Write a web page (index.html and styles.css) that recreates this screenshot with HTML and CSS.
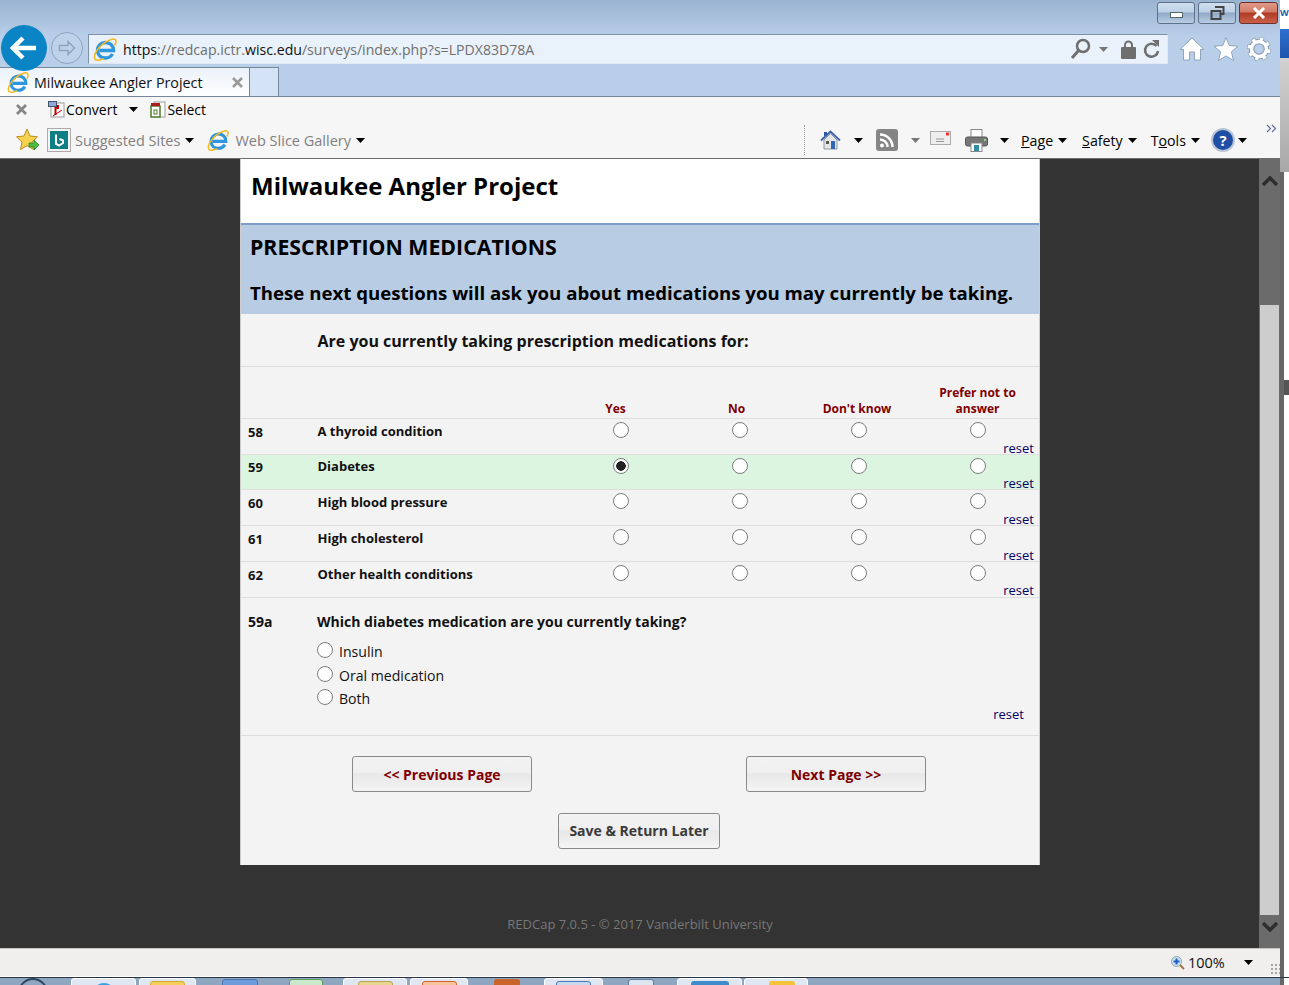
FILE: index.html
```html
<!DOCTYPE html>
<html lang="en">
<head>
    <meta charset="UTF-8">
    <meta name="viewport" content="width=device-width, initial-scale=1.0">
    <title>Milwaukee Angler Project</title>
    <link rel="stylesheet" href="styles.css">
</head>
<body>
    <svg class="defs" width="0" height="0">
        <symbol id="ie" viewBox="0 0 24 24">
            <path d="M6.500 13.500H20.500C20.500 8.500 17 5.500 12.500 5.500C8 5.500 4.500 9 4.500 13.500C4.500 18 8 21 12.500 21C15.500 21 18 19.500 19.500 17" fill="none" stroke="#2e96de" stroke-width="3.400"/>
            <path d="M2 22.500C-0.500 17 8 5 20 2C24 1.500 23.500 6 21.500 8.500M2 22.500C4 23.500 8 23 11 21.500" fill="none" stroke="#f2b81f" stroke-width="1.600"/>
        </symbol>
        <symbol id="caret" viewBox="0 0 9 5">
            <path d="M0 0H9L4.500 5Z"/>
        </symbol>
    </svg>

    <div class="screen">
        <div class="window">
            <div class="topbar">
                <div class="winbtns">
                    <div class="winbtn"><span class="min-glyph"></span></div>
                    <div class="winbtn">
                        <svg width="15" height="14" viewBox="0 0 15 14"><path d="M5 1H13.500V8H11M1.500 5H10.500V13H1.500Z" fill="none" stroke="#444" stroke-width="2"/></svg>
                    </div>
                    <div class="winbtn winbtn-close">
                        <svg width="14" height="12" viewBox="0 0 14 12"><path d="M2 1L12 11M12 1L2 11" fill="none" stroke="#fff" stroke-width="3"/></svg>
                    </div>
                </div>
                <div class="navrow">
                    <div class="back-btn">
                        <svg width="28" height="24" viewBox="0 0 28 24"><path d="M13 2L3 12L13 22M3 12H26" fill="none" stroke="#fff" stroke-width="4.500"/></svg>
                    </div>
                    <div class="fwd-btn">
                        <svg width="18" height="16" viewBox="0 0 18 16"><path d="M10 1.500L16.500 8L10 14.500V10.500H1.500V5.500H10Z" fill="none" stroke="#8ea6c0" stroke-width="1.500"/></svg>
                    </div>
                    <div class="address">
                        <svg class="addr-ie" width="24" height="24"><use href="#ie"/></svg>
                        <span class="url"><b>https</b>://redcap.ictr.<b>wisc.edu</b>/surveys/index.php?s=LPDX83D78A</span>
                        <svg width="22" height="22" viewBox="0 0 22 22"><circle cx="13" cy="8" r="6" fill="none" stroke="#6e6e6e" stroke-width="2.500"/><path d="M9 12L2 20" stroke="#6e6e6e" stroke-width="3"/></svg>
                        <svg class="caret addr-caret" width="9" height="5"><use href="#caret"/></svg>
                        <svg class="addr-lock" width="15" height="19" viewBox="0 0 15 19"><path d="M4 8V5A3.500 3.500 0 0 1 11 5V8" fill="none" stroke="#6e6e6e" stroke-width="2"/><rect y="7" width="15" height="12" rx="1" fill="#6e6e6e"/></svg>
                        <svg class="addr-refresh" width="17" height="20" viewBox="0 0 17 20"><path d="M13.500 7A6.500 6.500 0 1 0 15 12" fill="none" stroke="#6e6e6e" stroke-width="2.500"/><path d="M9 1L16 1V8Z" fill="#6e6e6e"/></svg>
                    </div>
                    <div class="ie-icons">
                        <svg width="26" height="24" viewBox="0 0 26 24"><path d="M13 1L25 12.500H21.500V23H15.500V15H10.500V23H4.500V12.500H1Z" fill="#fff" stroke="#8fa3bb"/></svg>
                        <svg width="26" height="24" viewBox="0 0 26 24"><path d="M13 0.500L16.300 8.500L25 9.200L18.400 14.800L20.500 23.500L13 18.900L5.500 23.500L7.600 14.800L1 9.200L9.700 8.500Z" fill="#fff" stroke="#8fa3bb"/></svg>
                        <svg width="24" height="24" viewBox="0 0 24 24"><circle cx="12" cy="12" r="7.500" fill="none" stroke="#8599b2" stroke-width="5.500"/><circle cx="12" cy="12" r="10.200" fill="none" stroke="#8599b2" stroke-width="3.800" stroke-dasharray="4.500 3.510"/><circle cx="12" cy="12" r="10" fill="none" stroke="#fff" stroke-width="3" stroke-dasharray="3.500 4.350" stroke-dashoffset="-0.400"/><circle cx="12" cy="12" r="7.500" fill="none" stroke="#fff" stroke-width="3.400"/></svg>
                    </div>
                </div>
            </div>

            <div class="tabrow">
                <div class="tab">
                    <svg width="22" height="22"><use href="#ie"/></svg>
                    <span class="tab-title">Milwaukee Angler Project</span>
                    <svg class="tab-close" width="11" height="11" viewBox="0 0 11 11"><path d="M1 1L10 10M10 1L1 10" stroke="#9a9a9a" stroke-width="2.600"/></svg>
                </div>
                <div class="newtab"></div>
            </div>

            <div class="cmd-row cmd-row-one">
                <svg class="bar-close" width="11" height="11" viewBox="0 0 11 11"><path d="M1 1L10 10M10 1L1 10" stroke="#858585" stroke-width="2.800"/></svg>
                <svg class="pdf-icon" width="17" height="17" viewBox="0 0 17 17"><rect x="3" y="2" width="13" height="14" fill="#fff" stroke="#999"/><path d="M5 5H10V7H7.500V14" fill="none" stroke="#c00000" stroke-width="2"/><path d="M5 15L14 9" stroke="#c00000"/><rect x="0.500" y="0.500" width="8" height="5" fill="#8faadc" stroke="#44546a"/></svg>
                <span class="cmd-label">Convert</span>
                <svg class="caret caret-dark convert-caret" width="9" height="5"><use href="#caret"/></svg>
                <svg class="select-icon" width="16" height="17" viewBox="0 0 16 17"><rect x="4" y="1" width="11" height="15" fill="#fff" stroke="#999"/><rect x="1" y="5" width="9" height="11" fill="#fff" stroke="#4e7d2a" stroke-width="1.500"/><rect x="4" y="9" width="3" height="4" fill="none" stroke="#4e7d2a"/><rect x="1" y="2" width="9" height="3" fill="#b01c1c"/></svg>
                <span class="cmd-label">Select</span>
            </div>

            <div class="cmd-row cmd-row-two">
                <svg class="fav-star" width="24" height="24" viewBox="0 0 24 24"><path d="M11 1L14 8L21.500 8.800L16 14L17.500 21.500L11 17.700L4.500 21.500L6 14L0.500 8.800L8 8Z" fill="#f7d24e" stroke="#b98d1f"/><path d="M13 15H18V12L23 17L18 22V19H13Z" fill="#4dbb3f" stroke="#2a7f25" stroke-width="0.700"/></svg>
                <div class="bing-box">
                    <svg width="18" height="18" viewBox="0 0 18 18"><rect width="18" height="18" fill="#0f7f86"/><path d="M6 3.500V13L9 14.500L13 12V9.500L9.500 8" fill="none" stroke="#fff" stroke-width="2"/></svg>
                </div>
                <span class="fav-link">Suggested Sites</span>
                <svg class="caret caret-dark" width="9" height="5"><use href="#caret"/></svg>
                <svg class="slice-icon" width="22" height="22"><use href="#ie"/></svg>
                <span class="fav-link">Web Slice Gallery</span>
                <svg class="caret caret-dark" width="9" height="5"><use href="#caret"/></svg>

                <div class="tools">
                    <svg class="t-home" width="21" height="20" viewBox="0 0 21 20"><path d="M4 2H7V6H4Z" fill="#2f55a8"/><path d="M4 10V19H17V10L10.500 3.500Z" fill="#e4e6e6" stroke="#8d97a3"/><path d="M1 10.500L10.500 1.500L20 10.500" fill="none" stroke="#3a61ad" stroke-width="1.800"/><rect x="6" y="11" width="3" height="3" fill="#555"/><rect x="11" y="11" width="4" height="8" fill="#2f67b5"/></svg>
                    <svg class="caret caret-dark t-c1" width="9" height="5"><use href="#caret"/></svg>
                    <svg class="t-rss" width="22" height="22" viewBox="0 0 22 22"><rect width="22" height="22" rx="3" fill="#858585"/><circle cx="6" cy="16.500" r="2" fill="#fff"/><path d="M4 10.500A7.500 7.500 0 0 1 11.500 18M4 5.500A12.500 12.500 0 0 1 16.500 18" fill="none" stroke="#fff" stroke-width="2.500"/></svg>
                    <svg class="caret t-c2" width="9" height="5"><use href="#caret"/></svg>
                    <svg class="t-mail" width="21" height="14" viewBox="0 0 21 14"><rect x="0.500" y="0.500" width="20" height="13" fill="#eee" stroke="#aaa"/><rect x="16" y="1.500" width="3" height="3" fill="#e33"/><path d="M6 8H14M6 10.500H14" stroke="#999"/></svg>
                    <svg class="t-print" width="23" height="23" viewBox="0 0 23 23"><rect x="6" y="0.500" width="11" height="8" fill="#fff" stroke="#888"/><rect x="0.500" y="8" width="22" height="9" rx="2" fill="#777" stroke="#555"/><rect x="6" y="14" width="11" height="8.500" fill="#fff" stroke="#888"/><rect x="9" y="16" width="5" height="6" fill="#2f8ea5"/><rect x="19" y="10" width="2" height="2" fill="#8fdc7f"/></svg>
                    <svg class="caret caret-dark t-c3" width="9" height="5"><use href="#caret"/></svg>
                    <span class="t-menu t-page"><u>P</u>age</span>
                    <svg class="caret caret-dark" width="9" height="5"><use href="#caret"/></svg>
                    <span class="t-menu t-safety"><u>S</u>afety</span>
                    <svg class="caret caret-dark" width="9" height="5"><use href="#caret"/></svg>
                    <span class="t-menu t-tools">T<u>o</u>ols</span>
                    <svg class="caret caret-dark" width="9" height="5"><use href="#caret"/></svg>
                    <div class="help-btn">?</div>
                    <svg class="caret caret-dark t-c4" width="9" height="5"><use href="#caret"/></svg>
                    <svg class="overflow" width="11" height="9" viewBox="0 0 11 9"><path d="M1 1L4.500 4.500L1 8M6 1L9.500 4.500L6 8" fill="none" stroke="#6a6aa8" stroke-width="1.200"/></svg>
                </div>
            </div>

            <div class="viewport">
                <div class="page">
                    <div class="survey">
                        <div class="survey-head">Milwaukee Angler Project</div>
                        <div class="section-head">
                            <div class="section-title">PRESCRIPTION MEDICATIONS</div>
                            <div class="section-sub">These next questions will ask you about medications you may currently be taking.</div>
                        </div>
                        <div class="matrix-intro">Are you currently taking prescription medications for:</div>

                        <div class="matrix-head">
                            <div class="col-yes">Yes</div>
                            <div class="col-no">No</div>
                            <div class="col-dk">Don't know</div>
                            <div>Prefer not to<br>answer</div>
                        </div>

                        <div class="mrow">
                            <div class="qnum">58</div>
                            <div class="qlabel">A thyroid condition</div>
                            <div class="cell"><input type="radio" name="q58"></div>
                            <div class="cell"><input type="radio" name="q58"></div>
                            <div class="cell"><input type="radio" name="q58"></div>
                            <div class="cell"><input type="radio" name="q58"><a class="reset">reset</a></div>
                        </div>
                        <div class="mrow mrow-on">
                            <div class="qnum">59</div>
                            <div class="qlabel">Diabetes</div>
                            <div class="cell"><input type="radio" name="q59" checked></div>
                            <div class="cell"><input type="radio" name="q59"></div>
                            <div class="cell"><input type="radio" name="q59"></div>
                            <div class="cell"><input type="radio" name="q59"><a class="reset">reset</a></div>
                        </div>
                        <div class="mrow">
                            <div class="qnum">60</div>
                            <div class="qlabel">High blood pressure</div>
                            <div class="cell"><input type="radio" name="q60"></div>
                            <div class="cell"><input type="radio" name="q60"></div>
                            <div class="cell"><input type="radio" name="q60"></div>
                            <div class="cell"><input type="radio" name="q60"><a class="reset">reset</a></div>
                        </div>
                        <div class="mrow">
                            <div class="qnum">61</div>
                            <div class="qlabel">High cholesterol</div>
                            <div class="cell"><input type="radio" name="q61"></div>
                            <div class="cell"><input type="radio" name="q61"></div>
                            <div class="cell"><input type="radio" name="q61"></div>
                            <div class="cell"><input type="radio" name="q61"><a class="reset">reset</a></div>
                        </div>
                        <div class="mrow mrow-last">
                            <div class="qnum">62</div>
                            <div class="qlabel">Other health conditions</div>
                            <div class="cell"><input type="radio" name="q62"></div>
                            <div class="cell"><input type="radio" name="q62"></div>
                            <div class="cell"><input type="radio" name="q62"></div>
                            <div class="cell"><input type="radio" name="q62"><a class="reset">reset</a></div>
                        </div>

                        <div class="followup">
                            <div class="qnum">59a</div>
                            <div class="followup-body">
                                <div class="qlabel followup-q">Which diabetes medication are you currently taking?</div>
                                <label class="opt"><input type="radio" name="q59a"> Insulin</label>
                                <label class="opt"><input type="radio" name="q59a"> Oral medication</label>
                                <label class="opt"><input type="radio" name="q59a"> Both</label>
                                <a class="reset reset-follow">reset</a>
                            </div>
                        </div>

                        <div class="survey-nav">
                            <div class="nav-pages">
                                <button class="sv-btn sv-prev">&lt;&lt; Previous Page</button>
                                <button class="sv-btn sv-next">Next Page &gt;&gt;</button>
                            </div>
                            <button class="sv-btn sv-save">Save &amp; Return Later</button>
                        </div>
                    </div>
                    <div class="page-foot">REDCap 7.0.5 - &copy; 2017 Vanderbilt University</div>
                </div>
                <div class="scrollbar">
                    <div class="sb-btn">
                        <svg width="16" height="10" viewBox="0 0 16 10"><path d="M1 9L8 2L15 9" fill="none" stroke="#2e2e2e" stroke-width="3.500"/></svg>
                    </div>
                    <div class="sb-track"></div>
                    <div class="sb-thumb"></div>
                    <div class="sb-btn sb-btn-down">
                        <svg width="16" height="10" viewBox="0 0 16 10"><path d="M1 1L8 8L15 1" fill="none" stroke="#2e2e2e" stroke-width="3.500"/></svg>
                    </div>
                </div>
            </div>

            <div class="statusbar">
                <svg class="zoom-icon" width="14" height="14" viewBox="0 0 14 14"><circle cx="5.500" cy="5.500" r="5" fill="#cfe0f5" stroke="#8aa"/><path d="M5.500 2.500V8.500M2.500 5.500H8.500" stroke="#1f5fc0" stroke-width="2"/><path d="M9 9L13 13" stroke="#a5713c" stroke-width="2"/></svg>
                <span class="zoom-val">100%</span>
                <svg class="caret caret-dark zoom-caret" width="9" height="5"><use href="#caret"/></svg>
                <div class="grip"></div>
            </div>
        </div>

        <div class="sliver">
            <div class="sliver-word">W</div>
            <div class="sliver-blue"></div>
            <div class="sliver-grey"></div>
            <div class="sliver-rest"></div>
            <div class="sliver-dark"></div>
            <div class="sliver-rest sliver-rest-end"></div>
        </div>
    </div>

    <div class="taskbar">
        <div class="orb"></div>
        <div class="task task-a"><span class="peek peek-blue"></span></div>
        <div class="task task-b"><span class="peek peek-yellow"></span></div>
        <div class="peek-flat peek-app1"></div>
        <div class="peek-flat peek-app2"></div>
        <div class="task task-c"><span class="peek peek-folder"></span></div>
        <div class="task task-d"><span class="peek peek-orange"></span></div>
        <div class="peek-flat peek-ppt"></div>
        <div class="task task-e"><span class="peek peek-outline"></span></div>
        <div class="peek-flat peek-app3"></div>
        <div class="task task-f"><span class="peek peek-net"></span></div>
        <div class="task task-g"><span class="peek peek-fire"></span></div>
        <div class="task-edge"></div>
    </div>
</body>
</html>
```

FILE: styles.css
```css
* {
    box-sizing: border-box;
}
html, body {
    margin: 0;
    height: 985px;
    overflow: hidden;
}
body {
    font-family: "Open Sans", Arial, sans-serif;
    background-color: #8fa6c0;
}
.defs {
    position: absolute;
}
.screen {
    display: flex;
    height: 977px;
}
.window {
    width: 1280px;
    display: flex;
    flex-direction: column;
}

/* title + address */
.topbar {
    height: 67px;
    background: linear-gradient(#9ab3d0, #b9cfe9 55%);
}
.winbtns {
    height: 34px;
    display: flex;
    justify-content: flex-end;
    gap: 3px;
    padding: 2px 2px 0 0;
}
.winbtn {
    width: 38px;
    height: 22px;
    border: 1px solid #5d7188;
    border-radius: 3px;
    background: linear-gradient(#cfdfef 0, #bdd0e5 45%, #90a9c5 50%, #b9cee5 100%);
    display: flex;
    align-items: center;
    justify-content: center;
}
.winbtn-close {
    width: 39px;
    border-color: #6d2f2a;
    background: linear-gradient(#e09a88 0, #d17a66 45%, #b13a24 50%, #c9604a 100%);
}
.min-glyph {
    width: 13px;
    height: 6px;
    margin-top: 4px;
    background-color: #fff;
    border: 1px solid #566;
}
.navrow {
    height: 30px;
    display: flex;
    align-items: center;
    padding-left: 1px;
}
.back-btn {
    width: 46px;
    height: 46px;
    flex-shrink: 0;
    border-radius: 50%;
    background-color: #0a84c4;
    display: flex;
    align-items: center;
    justify-content: center;
    position: relative;
    z-index: 2;
    margin-top: -2px;
}
.fwd-btn {
    width: 32px;
    height: 32px;
    flex-shrink: 0;
    margin-left: 4px;
    margin-top: -2px;
    border: 1px solid #8fa6bf;
    border-radius: 50%;
    background-color: #bed2e9;
    display: flex;
    align-items: center;
    justify-content: center;
}
.address {
    width: 1080px;
    height: 30px;
    margin-left: 5px;
    display: flex;
    align-items: center;
    padding: 0 7px 0 4px;
    background-color: #e9f1fa;
    border: 1px solid #7e90a6;
    border-right-color: #dfe8f3;
    border-bottom-color: #dfe8f3;
}
.addr-ie {
    flex-shrink: 0;
}
.url {
    flex: 1;
    margin-left: 6px;
    font-size: 14.100px;
    color: #6f6f6f;
    white-space: nowrap;
}
.url b {
    font-weight: 400;
    color: #111;
}
.caret {
    flex-shrink: 0;
    fill: #777;
}
.caret-dark {
    fill: #000;
}
.addr-caret {
    margin-left: 7px;
}
.addr-lock {
    margin-left: 13px;
}
.addr-refresh {
    margin-left: 7px;
}
.ie-icons {
    display: flex;
    align-items: center;
    gap: 8px;
    margin-left: 11px;
}

/* tabs */
.tabrow {
    height: 30px;
    display: flex;
    background-color: #b9cfe9;
    border-bottom: 1px solid #76879c;
}
.tab {
    width: 250px;
    height: 29px;
    display: flex;
    align-items: center;
    gap: 5px;
    padding-left: 7px;
    background: linear-gradient(#eaf1f9, #fff);
    border: 1px solid #76879c;
    border-bottom: 0;
    border-left: 0;
}
.tab-title {
    flex: 1;
    font-size: 14.300px;
    color: #111;
}
.tab-close {
    margin-right: 6px;
}
.newtab {
    width: 29px;
    background-color: #d4e4f6;
    border: 1px solid #76879c;
    border-bottom: 0;
    border-left: 0;
}

/* command + favorites bars */
.cmd-row {
    display: flex;
    align-items: center;
    background-color: #f6f6f6;
    color: #000;
}
.cmd-row-one {
    height: 28px;
    padding: 0 0 4px 16px;
}
.cmd-row-two {
    height: 34px;
    padding: 0 0 3px 16px;
    border-bottom: 1px solid #6e6e6e;
}
.bar-close {
    margin-right: 21px;
    flex-shrink: 0;
}
.pdf-icon {
    flex-shrink: 0;
}
.cmd-label {
    margin-left: 1px;
    font-size: 14px;
}
.convert-caret {
    margin-left: 12px;
}
.select-icon {
    margin-left: 12px;
}
.fav-star {
    flex-shrink: 0;
}
.bing-box {
    width: 24px;
    height: 24px;
    margin-left: 7px;
    display: flex;
    align-items: center;
    justify-content: center;
    border: 1px solid #aaa;
}
.fav-link {
    margin: 0 5px 0 4px;
    font-size: 14.500px;
    color: #808080;
}
.slice-icon {
    margin-left: 13px;
    margin-right: 2px;
}
.tools {
    margin-left: auto;
    height: 30px;
    width: 476px;
    display: flex;
    align-items: center;
    border-left: 1px dotted #999;
    padding-left: 15px;
}
.t-c1 {
    margin-left: 13px;
}
.t-rss {
    margin-left: 13px;
}
.t-c2 {
    margin-left: 13px;
}
.t-mail {
    margin-left: 10px;
    margin-bottom: 4px;
}
.t-print {
    margin-left: 14px;
}
.t-c3 {
    margin-left: 12px;
}
.t-menu {
    margin-right: 5px;
    font-size: 14.200px;
}
.t-page {
    margin-left: 12px;
}
.t-safety {
    margin-left: 15px;
}
.t-tools {
    margin-left: 14px;
}
.help-btn {
    width: 24px;
    height: 24px;
    margin-left: 11px;
    border-radius: 50%;
    border: 2px solid #b9c4d4;
    background-color: #1f4ea5;
    color: #fff;
    font-size: 15px;
    font-weight: 700;
    line-height: 20px;
    text-align: center;
}
.t-c4 {
    margin-left: 3px;
}
.overflow {
    margin-left: 19px;
    margin-bottom: 24px;
    flex-shrink: 0;
}

/* page viewport */
.viewport {
    height: 789px;
    display: flex;
    background-color: #333;
}
.page {
    flex: 1;
    padding-left: 240px;
}
.survey {
    width: 800px;
    height: 706px;
    background-color: #f3f3f3;
    border: 1px solid #ccc;
    border-top: 0;
    border-bottom: 0;
}
.survey-head {
    height: 64px;
    padding: 9px 0 0 10px;
    background-color: #fff;
    border-top: 1px solid #fff;
    font-size: 24px;
    font-weight: 700;
    line-height: 33px;
    color: #000;
}
.section-head {
    height: 91px;
    padding: 8px 9px 0;
    background-color: #b8cce4;
    border-top: 2px solid #7f9ec7;
    font-weight: 700;
    color: #000;
}
.section-title {
    font-size: 21.300px;
    line-height: 28px;
}
.section-sub {
    margin-top: 18px;
    font-size: 18.650px;
    line-height: 27px;
    white-space: nowrap;
}
.matrix-intro {
    height: 53px;
    padding: 16px 0 0 76.500px;
    border-bottom: 1px solid #ddd;
    font-size: 16px;
    font-weight: 700;
    line-height: 22px;
    color: #111;
}
.matrix-head {
    height: 51px;
    display: grid;
    grid-template-columns: repeat(4, 119px);
    justify-content: start;
    align-items: end;
    padding: 0 0 1px 320px;
    text-align: center;
    font-size: 12px;
    font-weight: 700;
    line-height: 16px;
    color: #800000;
}
.col-yes {
    padding-right: 10px;
}
.col-no {
    padding-right: 6px;
}
.col-dk {
    padding-right: 3px;
}
.mrow {
    height: 36px;
    display: grid;
    grid-template-columns: 76.500px 243.500px repeat(4, 119px);
    border-top: 1px solid #ddd;
}
.mrow-on {
    height: 35px;
    background-color: #dcf5e0;
}
.qnum {
    padding: 4px 0 0 7px;
    font-size: 13px;
    font-weight: 700;
    line-height: 18px;
    color: #111;
}
.qlabel {
    padding-top: 3px;
    font-size: 13px;
    font-weight: 700;
    line-height: 18px;
    color: #111;
}
.mrow-on .qnum {
    padding-top: 3px;
}
.mrow-on .qlabel {
    padding-top: 2px;
}
.cell {
    display: flex;
    flex-direction: column;
    align-items: center;
    padding-top: 3px;
}
input[type="radio"] {
    appearance: none;
    flex-shrink: 0;
    width: 16px;
    height: 16px;
    margin: 0;
    border: 1.500px solid #7d7d7d;
    border-radius: 50%;
    background-color: #fff;
}
input[type="radio"]:checked {
    background: radial-gradient(circle, #222 0, #222 4.500px, #fff 5px);
}
.reset {
    font-size: 13px;
    line-height: 16px;
    color: #000066;
}
.cell .reset {
    align-self: flex-end;
    margin: 2px 3px 0 0;
}
.mrow-on .cell .reset, .mrow-last .cell .reset {
    margin-top: 1px;
}
.followup {
    height: 139px;
    display: grid;
    grid-template-columns: 76px 1fr;
    border-top: 1px solid #ddd;
    border-bottom: 1px solid #ddd;
    padding-top: 13px;
}
.followup .qnum {
    padding-top: 2px;
    font-size: 14px;
}
.followup-body {
    display: flex;
    flex-direction: column;
    padding-right: 15px;
}
.followup-q {
    padding-top: 2px;
    font-size: 14px;
    margin-bottom: 9px;
}
.opt {
    height: 23.500px;
    display: flex;
    align-items: center;
    gap: 6px;
    font-size: 14.100px;
    color: #111;
}
.opt input {
    margin-bottom: 3px;
}
.reset-follow {
    align-self: flex-end;
    margin-top: -5px;
}
.survey-nav {
    display: flex;
    flex-direction: column;
    align-items: center;
    padding-top: 20px;
}
.nav-pages {
    width: 100%;
    display: flex;
    gap: 214px;
    padding-left: 111px;
    margin-bottom: 21px;
}
.sv-btn {
    width: 180px;
    height: 36px;
    padding: 0;
    font-family: "Open Sans", Arial, sans-serif;
    font-size: 14px;
    font-weight: 700;
    color: #800000;
    border: 1px solid #8a8a8a;
    border-radius: 3px;
    background: linear-gradient(#f2f2f2, #f0f0f0 45%, #e8e8e8 50%, #f4f4f4);
}
.sv-save {
    width: 162px;
    padding: 0 0 2px 1px;
    margin-left: -3px;
    color: #3a3a3a;
}
.page-foot {
    width: 800px;
    margin-top: 50px;
    text-align: center;
    font-size: 13px;
    line-height: 18px;
    color: #777;
}

/* scrollbar */
.scrollbar {
    width: 21px;
    display: flex;
    flex-direction: column;
    background-color: #6b6b6b;
}
.sb-btn {
    height: 33px;
    padding-top: 10px;
    display: flex;
    align-items: center;
    justify-content: center;
    flex-shrink: 0;
}
.sb-track {
    height: 113px;
}
.sb-thumb {
    height: 610px;
    margin: 0 1px;
    background-color: #cdcdcd;
}
.sb-btn-down {
    flex: 1;
    padding: 0 0 10px;
}

/* status bar */
.statusbar {
    flex: 1;
    display: flex;
    align-items: center;
    padding: 0 4px 0 1171px;
    background-color: #f1eeee;
    border-top: 1px solid #c4c4c4;
    border-bottom: 1px solid #fff;
}
.zoom-icon {
    flex-shrink: 0;
}
.zoom-val {
    margin-left: 3px;
    font-size: 14.500px;
    color: #111;
}
.zoom-caret {
    margin-left: 19px;
}
.grip {
    width: 12px;
    height: 12px;
    margin: 12px 0 0 17px;
    flex-shrink: 0;
    background-image: radial-gradient(#a5a5a5 1px, transparent 1.200px);
    background-size: 4px 4px;
}

/* edge of the window behind */
.sliver {
    width: 9px;
    display: flex;
    flex-direction: column;
    background-color: #fff;
}
.sliver-word {
    height: 29px;
    padding-top: 7px;
    font-size: 9px;
    font-weight: 700;
    line-height: 12px;
    color: #1a5fb4;
    background-color: #fff;
}
.sliver-blue {
    height: 29px;
    background: linear-gradient(#2f6fd0, #1d55ad);
}
.sliver-grey {
    height: 114px;
    background: linear-gradient(#d2d2d2, #a8a8a8);
}
.sliver-rest {
    height: 208px;
    border-left: 4px solid #666;
}
.sliver-rest-end {
    height: auto;
    flex: 1;
}
.sliver-dark {
    height: 15px;
    border-left: 4px solid #666;
    background-color: #555;
}

/* taskbar strip */
.taskbar {
    height: 8px;
    display: flex;
    overflow: hidden;
    border-top: 1px solid #2a3442;
    background-color: #8fa6c0;
}
.orb {
    width: 30px;
    height: 30px;
    margin-left: 18px;
    border: 2px solid #2f4660;
    border-radius: 50%;
    flex-shrink: 0;
}
.task {
    height: 20px;
    flex-shrink: 0;
    display: flex;
    justify-content: center;
    padding-top: 2px;
    background-color: #dfe8f2;
    border: 1px solid #fff;
    border-radius: 3px 3px 0 0;
}
.task-a { width: 65px; margin-left: 23px; }
.task-b { width: 57px; margin-left: 3px; }
.task-c { width: 64px; margin-left: 20px; }
.task-d { width: 58px; margin-left: 3px; }
.task-e { width: 59px; margin-left: 24px; }
.task-f { width: 65px; margin-left: 23px; }
.task-g { width: 64px; margin-left: 2px; }
.task-edge {
    width: 9px;
    margin-left: auto;
    border-left: 4px solid #666;
    background-color: #fff;
}
.peek {
    width: 35px;
    height: 16px;
    border-radius: 3px 3px 0 0;
}
.peek-blue { width: 20px; margin-top: 2px; border-radius: 50%; background-color: #3aa1e0; }
.peek-yellow { background-color: #f6cf5c; border: 1px solid #d9a92d; }
.peek-folder { background-color: #e9d58f; border: 1px solid #b8a35a; }
.peek-orange { background-color: #f5c49b; border: 1px solid #d9602a; }
.peek-outline { background-color: #c9d9ee; border: 1px solid #4a76b5; }
.peek-net { width: 38px; background-color: #3d8cc9; }
.peek-fire { width: 26px; margin-left: 12px; background-color: #f5c33a; }
.peek-flat {
    height: 16px;
    flex-shrink: 0;
    border-radius: 3px 3px 0 0;
}
.peek-app1 { width: 36px; margin-left: 26px; margin-top: 1px; background-color: #6c9bdc; border: 1px solid #4a76b5; }
.peek-app2 { width: 34px; margin-left: 31px; margin-top: 1px; background-color: #cce8cc; border: 1px solid #5aa05a; }
.peek-ppt { width: 26px; margin-left: 26px; margin-top: 1px; background-color: #c8642a; }
.peek-app3 { width: 26px; margin-left: 25px; margin-top: 1px; background-color: #dde7f1; border: 1px solid #5d7c9c; }
```
